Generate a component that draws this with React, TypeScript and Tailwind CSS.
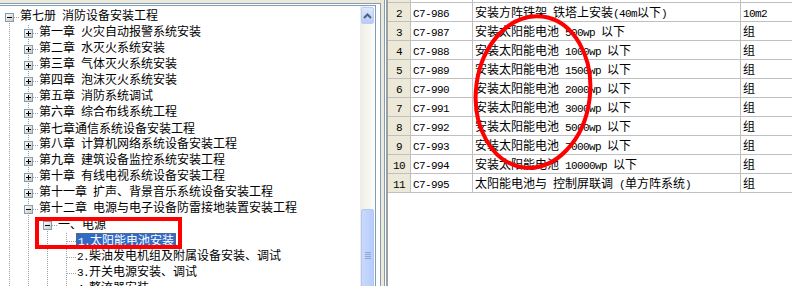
import React from "react";

type Row = {
  level: number;
  text: string;
  box?: "plus" | "minus";
  first?: boolean;
  selected?: boolean;
};

const TREE: Row[] = [
  { level: 0, text: "第七册 消防设备安装工程", box: "minus", first: true },
  { level: 1, text: "第一章 火灾自动报警系统安装", box: "plus" },
  { level: 1, text: "第二章 水灭火系统安装", box: "plus" },
  { level: 1, text: "第三章 气体灭火系统安装", box: "plus" },
  { level: 1, text: "第四章 泡沫灭火系统安装", box: "plus" },
  { level: 1, text: "第五章 消防系统调试", box: "plus" },
  { level: 1, text: "第六章 综合布线系统工程", box: "plus" },
  { level: 1, text: "第七章通信系统设备安装工程", box: "plus" },
  { level: 1, text: "第八章 计算机网络系统设备安装工程", box: "plus" },
  { level: 1, text: "第九章 建筑设备监控系统安装工程", box: "plus" },
  { level: 1, text: "第十章 有线电视系统设备安装工程", box: "plus" },
  { level: 1, text: "第十一章 扩声、背景音乐系统设备安装工程", box: "plus" },
  { level: 1, text: "第十二章 电源与电子设备防雷接地装置安装工程", box: "minus" },
  { level: 2, text: "一、电源", box: "minus" },
  { level: 3, text: "1.太阳能电池安装", selected: true },
  { level: 3, text: "2.柴油发电机组及附属设备安装、调试" },
  { level: 3, text: "3.开关电源安装、调试" },
  { level: 3, text: "4.整流器安装" },
];

const ITEMS = [
  ["2", "C7-986", "安装方阵铁架 铁塔上安装(40m以下)", "10m2"],
  ["3", "C7-987", "安装太阳能电池 500wp 以下", "组"],
  ["4", "C7-988", "安装太阳能电池 1000wp 以下", "组"],
  ["5", "C7-989", "安装太阳能电池 1500wp 以下", "组"],
  ["6", "C7-990", "安装太阳能电池 2000wp 以下", "组"],
  ["7", "C7-991", "安装太阳能电池 3000wp 以下", "组"],
  ["8", "C7-992", "安装太阳能电池 5000wp 以下", "组"],
  ["9", "C7-993", "安装太阳能电池 7000wp 以下", "组"],
  ["10", "C7-994", "安装太阳能电池 10000wp 以下", "组"],
  ["11", "C7-995", "太阳能电池与 控制屏联调 (单方阵系统)", "组"],
];

// ascii runs get a half-width mono font, like SimSun
function Txt({ s }: { s: string }) {
  const parts = s.split(/([\x20-\x7e]+)/);
  return (
    <>
      {parts.map((p, i) =>
        i % 2 === 1 ? (
          <span key={i} className="font-['Liberation_Mono'] text-[11px] tracking-[-0.6px]">
            {p}
          </span>
        ) : (
          p
        )
      )}
    </>
  );
}

function Cell({ top, bottom, horiz, box }: { top?: boolean; bottom?: boolean; horiz?: boolean; box?: "plus" | "minus" }) {
  return (
    <svg width="19" height="16" className="shrink-0" shapeRendering="crispEdges">
      {top && <line x1="9.5" y1="0" x2="9.5" y2="8" stroke="#a0a0a0" strokeDasharray="1 1" />}
      {bottom && <line x1="9.5" y1="8" x2="9.5" y2="16" stroke="#a0a0a0" strokeDasharray="1 1" />}
      {horiz && <line x1="10" y1="8.5" x2="19" y2="8.5" stroke="#a0a0a0" strokeDasharray="1 1" />}
      {box && (
        <>
          <defs>
            <linearGradient id="bx" x1="0" y1="0" x2="1" y2="1">
              <stop offset="0" stopColor="#ffffff" />
              <stop offset="1" stopColor="#c8c6bc" />
            </linearGradient>
          </defs>
          <rect x="5.5" y="4.5" width="8" height="8" fill="url(#bx)" stroke="#7f9db9" />
          <line x1="7" y1="8.5" x2="12" y2="8.5" stroke="#000" />
          {box === "plus" && <line x1="9.5" y1="6" x2="9.5" y2="11" stroke="#000" />}
        </>
      )}
    </svg>
  );
}

function TreeRow({ row }: { row: Row }) {
  const cells = [];
  for (let i = 0; i < row.level; i++) cells.push(<Cell key={i} top bottom />);
  cells.push(<Cell key="me" top={!row.first} bottom horiz box={row.box} />);
  return (
    <div className="flex h-[16px] items-center">
      {cells}
      <span
        className={
          row.selected
            ? "self-start h-[15px] leading-[11px] pb-[2px] px-px border border-dotted border-[#6b6b50] bg-[#316ac5] text-white whitespace-pre"
            : "leading-[14px] pb-[2px] px-px text-black whitespace-pre"
        }
      >
        <Txt s={row.text} />
      </span>
    </div>
  );
}

export default function App() {
  return (
    <div className="relative w-[792px] h-[286px] overflow-hidden flex bg-[#ece9d8] text-[12px] [font-family:'Noto_Sans_CJK_SC',sans-serif]">
      {/* left: tree pane */}
      <div className="w-[381px] shrink-0 pt-[3px] flex flex-col">
        <div className="flex-1 flex flex-col border-t border-r border-[#7f9db9] bg-white">
          <div className="flex-1 flex border-t border-r border-r-white border-t-white">
            <div className="w-[360px] shrink-0 overflow-hidden pt-[3px] border-t border-[#7f9db9]">
              {TREE.map((r, i) => (
                <TreeRow key={i} row={r} />
              ))}
            </div>
            {/* scrollbar */}
            <div className="w-[16px] shrink-0 flex flex-col pt-px bg-gradient-to-r from-[#eeede5] to-[#fdfdfb] border-t border-r border-[#7f9db9]">
              <div className="h-[17px] mx-px rounded-[2px] border border-[#b9cdf7] bg-gradient-to-b from-[#dde7fd] to-[#b7cbf8] flex items-center justify-center">
                <svg width="9" height="6" viewBox="0 0 9 6">
                  <path d="M1 5 L4.5 1.5 L8 5" fill="none" stroke="#4d6185" strokeWidth="2" />
                </svg>
              </div>
              <div className="h-[185px] shrink-0" />
              <div className="h-[100px] shrink-0 mx-px rounded-[2px] border border-[#b1c7f6] bg-gradient-to-r from-[#c9d8fc] to-[#b8cdf9] flex flex-col items-center pt-[42px] gap-px">
                <div className="w-[6px] h-px bg-[#8ea5d8]" />
                <div className="w-[6px] h-px bg-[#8ea5d8]" />
                <div className="w-[6px] h-px bg-[#8ea5d8]" />
                <div className="w-[6px] h-px bg-[#8ea5d8]" />
              </div>
            </div>
          </div>
        </div>
      </div>

      <div className="w-[3px] shrink-0" />

      {/* right: item grid */}
      <div className="flex-1 border-l border-[#7f9db9] bg-white">
        <div className="h-full border-l border-white">
          <div className="h-full border-l-2 border-[#a0a0a0]">
            <div className="flex h-[3px] border-b border-[#c0c0c0]">
              <div className="w-[23px] bg-[#ece9d8] border-r border-[#c0c0c0]" />
              <div className="w-[62px] border-r border-[#c0c0c0]" />
              <div className="w-[268px] border-r border-[#c0c0c0]" />
            </div>
            {ITEMS.map((it, i) => (
              <div key={i} className="flex h-[19px] border-b border-[#c0c0c0] leading-[18px] whitespace-pre text-black">
                <div className="w-[23px] shrink-0 bg-[#ece9d8] border-r border-[#c0c0c0] text-center">
                  <Txt s={it[0]} />
                </div>
                <div className="w-[62px] shrink-0 border-r border-[#c0c0c0] pl-[2px]">
                  <Txt s={it[1]} />
                </div>
                <div className="w-[268px] shrink-0 border-r border-[#c0c0c0] pl-[2px] overflow-hidden">
                  <Txt s={it[2]} />
                </div>
                <div className="flex-1 pl-[2px]">
                  <Txt s={it[3]} />
                </div>
              </div>
            ))}
          </div>
        </div>
      </div>

      {/* red annotations drawn over the screenshot */}
      <svg className="absolute left-0 top-0 pointer-events-none" width="792" height="286">
        <rect x="37" y="219" width="143" height="28" fill="none" stroke="#ff0000" strokeWidth="4" />
        <ellipse cx="533" cy="92" rx="57" ry="76" transform="rotate(7 533 92)" fill="none" stroke="#ff0000" strokeWidth="4" />
      </svg>
    </div>
  );
}
